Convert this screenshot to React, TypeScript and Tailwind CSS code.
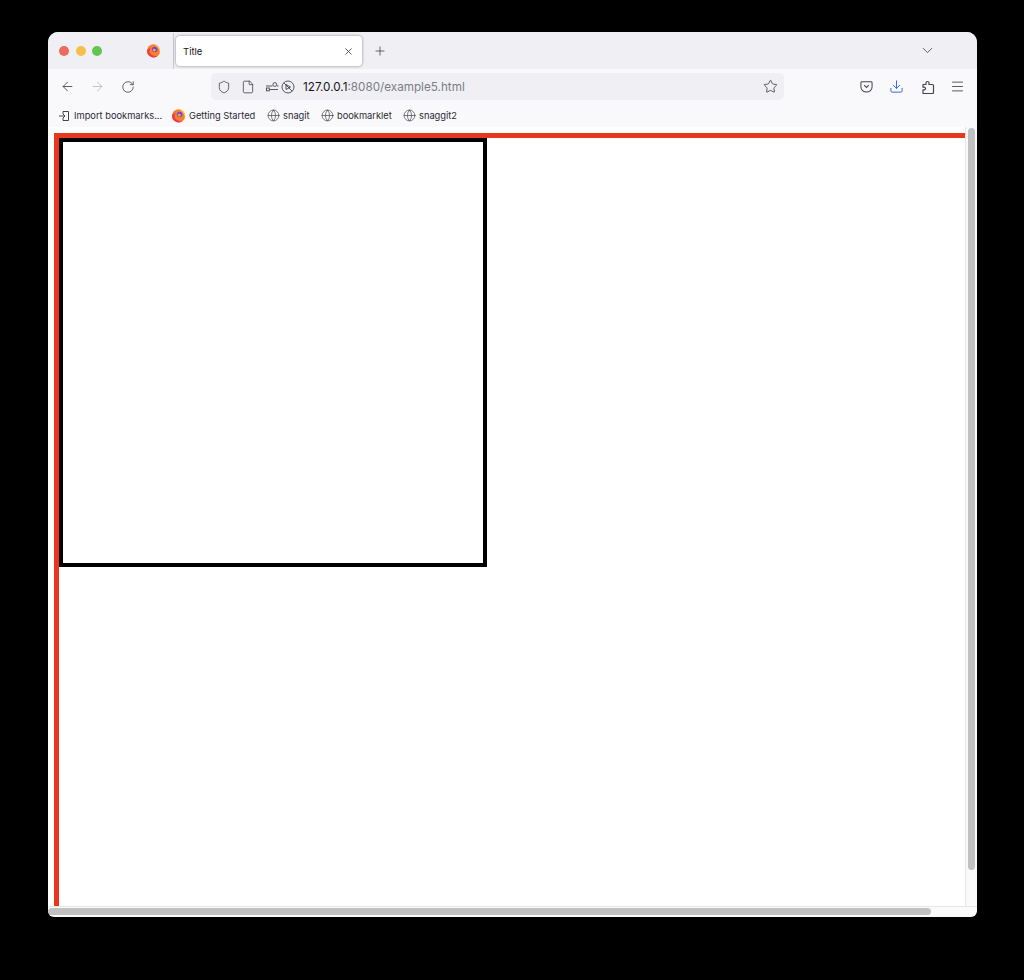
import React from "react";
import { ArrowLeft, ArrowRight, ChevronDown, Download, File, Globe, Menu, Plus, RotateCw, Shield, Star, X } from "lucide-react";

const iconClass = "text-[#45454d]";

const FirefoxLogo = () => (
  <svg width="15" height="15" viewBox="0 0 16 16" className="shrink-0">
    <circle cx="8" cy="8.400" r="7" fill="#f7802c" />
    <path d="M1.200 7.500a7 7 0 0 0 11.600 6C9 14.500 5 13 4 9.500 3.700 8 4 6.500 5 5.500 3.500 5.500 2 6 1.200 7.500Z" fill="#ea3d4e" />
    <circle cx="9.300" cy="6.800" r="2.900" fill="#7542e5" />
    <path d="M8.500 1.300c3.200.4 5.800 2.700 6.500 5.700.2 1 .1 2-.1 3-.6-3.600-2.800-6.400-6.400-8.700Z" fill="#ffc94f" />
    <circle cx="8.800" cy="7.600" r="1.500" fill="#ffa436" />
  </svg>
);

const PermissionsIcon = () => (
  <svg width="14" height="14" viewBox="0 0 14 14" fill="none" stroke="#45454d" strokeWidth="0.900" className="shrink-0">
    <path d="M1 6h6.500M12 6h1.500" />
    <circle cx="9.800" cy="4.500" r="1.900" />
    <rect x="1.500" y="8" width="2.800" height="2.800" />
    <path d="M4.500 9.500h8.500" />
  </svg>
);

const BlockedIcon = () => (
  <svg width="14" height="14" viewBox="0 0 14 14" fill="none" stroke="#45454d" strokeWidth="0.900" className="shrink-0">
    <circle cx="7" cy="7" r="6" />
    <path d="M2.800 2.800l8.400 8.400" />
    <path d="M5 4.500v5l4.500-2.500Z" />
  </svg>
);

const PocketIcon = () => (
  <svg width="13" height="13" viewBox="0 0 14 14" fill="none" stroke="#45454d" strokeWidth="1.100">
    <path d="M2 2h10a1 1 0 0 1 1 1v4.500a6 5.500 0 0 1-12 0V3a1 1 0 0 1 1-1Z" />
    <path d="M4.500 5.500 7 8l2.500-2.500" />
  </svg>
);

const PuzzleIcon = () => (
  <svg width="13" height="14" viewBox="0 0 13 14" fill="none" stroke="#45454d" strokeWidth="1.200" strokeLinejoin="round" className="shrink-0">
    <path d="M1 4.500h3V3a1.500 1.500 0 0 1 3 0v1.500h3.500a1 1 0 0 1 1 1v7a1 1 0 0 1-1 1H1V9.800h1.200a1.300 1.300 0 0 0 0-2.600H1Z" />
  </svg>
);

const ImportIcon = () => (
  <svg width="12" height="12" viewBox="0 0 12 12" fill="none" stroke="#45454d" strokeWidth="1" className="shrink-0">
    <path d="M5 1.500h5.500v9H5M5 1.500V4M5 10.500V8M1 6h6M5 4l2 2-2 2" />
  </svg>
);

const BookmarkItem = ({ label, width }: { label: string; width: string }) => (
  <div className="flex items-center gap-[3px]">
    <Globe size={13} strokeWidth={1.300} className={iconClass + " shrink-0"} />
    <span className={"text-[9.300px] text-[#2b2a33] whitespace-nowrap " + width}>{label}</span>
  </div>
);

export default function App() {
  return (
    <div className="w-[1024px] h-[980px] bg-black pt-8 pl-12 overflow-hidden font-['Inter',sans-serif]">
      <div className="w-[929px] h-[885px] rounded-t-[10px] rounded-b-[6px] overflow-hidden flex flex-col bg-[#fafafa]">
        {/* Tab strip */}
        <div className="h-[37px] bg-[#f0f0f4] flex items-center shrink-0">
          <div className="flex items-center gap-[6.500px] pl-[11px]">
            <span className="w-[10px] h-[10px] rounded-full bg-[#ec6a5e]" />
            <span className="w-[10px] h-[10px] rounded-full bg-[#f4bf4f]" />
            <span className="w-[10px] h-[10px] rounded-full bg-[#61c554]" />
          </div>
          <div className="ml-[44px]">
            <FirefoxLogo />
          </div>
          <div className="ml-[12px] w-px h-[36px] bg-[#c9c9cf]" />
          <div className="ml-[2px] w-[186px] h-[30px] bg-white rounded-[4px] shadow-[0_0_3px_rgba(0,0,0,0.45)] flex items-center justify-between pl-[7px] pr-[8px] pt-[2px]">
            <span className="mt-[2px] text-[9.500px] text-[#15141a]">Title</span>
            <X size={11} strokeWidth={1.800} className="text-[#3a3a40]" />
          </div>
          <Plus size={14} strokeWidth={1.400} className={iconClass + " ml-[11px]"} />
          <ChevronDown size={17} strokeWidth={1.200} className={iconClass + " ml-[532px]"} />
        </div>

        {/* Toolbar */}
        <div className="h-[33px] pt-[2px] bg-[#f9f9fb] flex items-center shrink-0">
          <div className="flex items-center pl-[12px]">
            <ArrowLeft size={15} strokeWidth={1.400} className={iconClass} />
            <ArrowRight size={15} strokeWidth={1.300} className="text-[#b4b4b9] ml-[15px]" />
            <RotateCw size={14} strokeWidth={1.400} className={iconClass + " ml-[16px]"} />
          </div>
          <div className="ml-[76px] w-[573px] h-[27px] bg-[#f0f0f4] rounded-[5px] flex items-center pl-[6px] pr-[6px]">
            <Shield size={14} strokeWidth={1.400} className={iconClass + " shrink-0"} />
            <File size={14} strokeWidth={1.400} className={iconClass + " shrink-0 ml-[10px]"} />
            <div className="ml-[10px]">
              <PermissionsIcon />
            </div>
            <div className="ml-[2px]">
              <BlockedIcon />
            </div>
            <span className="ml-[8px] mt-[2px] text-[11.700px] text-[#15141a] whitespace-nowrap">
              127.0.0.1<span className="text-[#7c7c84]">:8080/example5.html</span>
            </span>
            <Star size={15} strokeWidth={1.400} className={iconClass + " ml-auto"} />
          </div>
          <div className="ml-[76px]">
            <PocketIcon />
          </div>
          <Download size={15} strokeWidth={1.500} className="text-[#2b5fe0] ml-[16px]" />
          <div className="ml-[18px]">
            <PuzzleIcon />
          </div>
          <Menu size={15} strokeWidth={1.400} className={iconClass + " ml-[15px]"} />
        </div>

        {/* Bookmarks */}
        <div className="h-[25px] pt-[2px] bg-[#f9f9fb] flex items-center pl-[10px] shrink-0">
          <div className="flex items-center gap-[4px]">
            <ImportIcon />
            <span className="text-[9.300px] text-[#2b2a33] whitespace-nowrap w-[87px]">Import bookmarks...</span>
          </div>
          <div className="flex items-center gap-[3px] ml-[10px]">
            <FirefoxLogo />
            <span className="text-[9.300px] text-[#2b2a33] whitespace-nowrap w-[68px]">Getting Started</span>
          </div>
          <div className="ml-[10px]">
            <BookmarkItem label="snagit" width="w-[28px]" />
          </div>
          <div className="ml-[10px]">
            <BookmarkItem label="bookmarklet" width="w-[55px]" />
          </div>
          <div className="ml-[11px]">
            <BookmarkItem label="snaggit2" width="w-[38px]" />
          </div>
        </div>

        {/* Page with scrollbars */}
        <div className="flex-1 flex min-h-0">
          <div className="flex-1 bg-white border-r border-[#e6e6e6] pl-[6px] pt-[6px] flex flex-col">
            <div className="flex-1 border-t-[5px] border-l-[5px] border-[#e8371c]">
              <div className="w-[428px] h-[429px] border-4 border-black bg-white" />
            </div>
          </div>
          <div className="w-[11px] pl-[2px] pr-[2px] pt-[1px] shrink-0">
            <div className="w-[7px] h-[742px] rounded-full bg-[#c1c1c1]" />
          </div>
        </div>
        <div className="h-[11px] shrink-0 border-t border-[#e6e6e6] pt-[1px]">
          <div className="w-[883px] h-[7px] rounded-full bg-[#c1c1c1]" />
        </div>
      </div>
    </div>
  );
}
